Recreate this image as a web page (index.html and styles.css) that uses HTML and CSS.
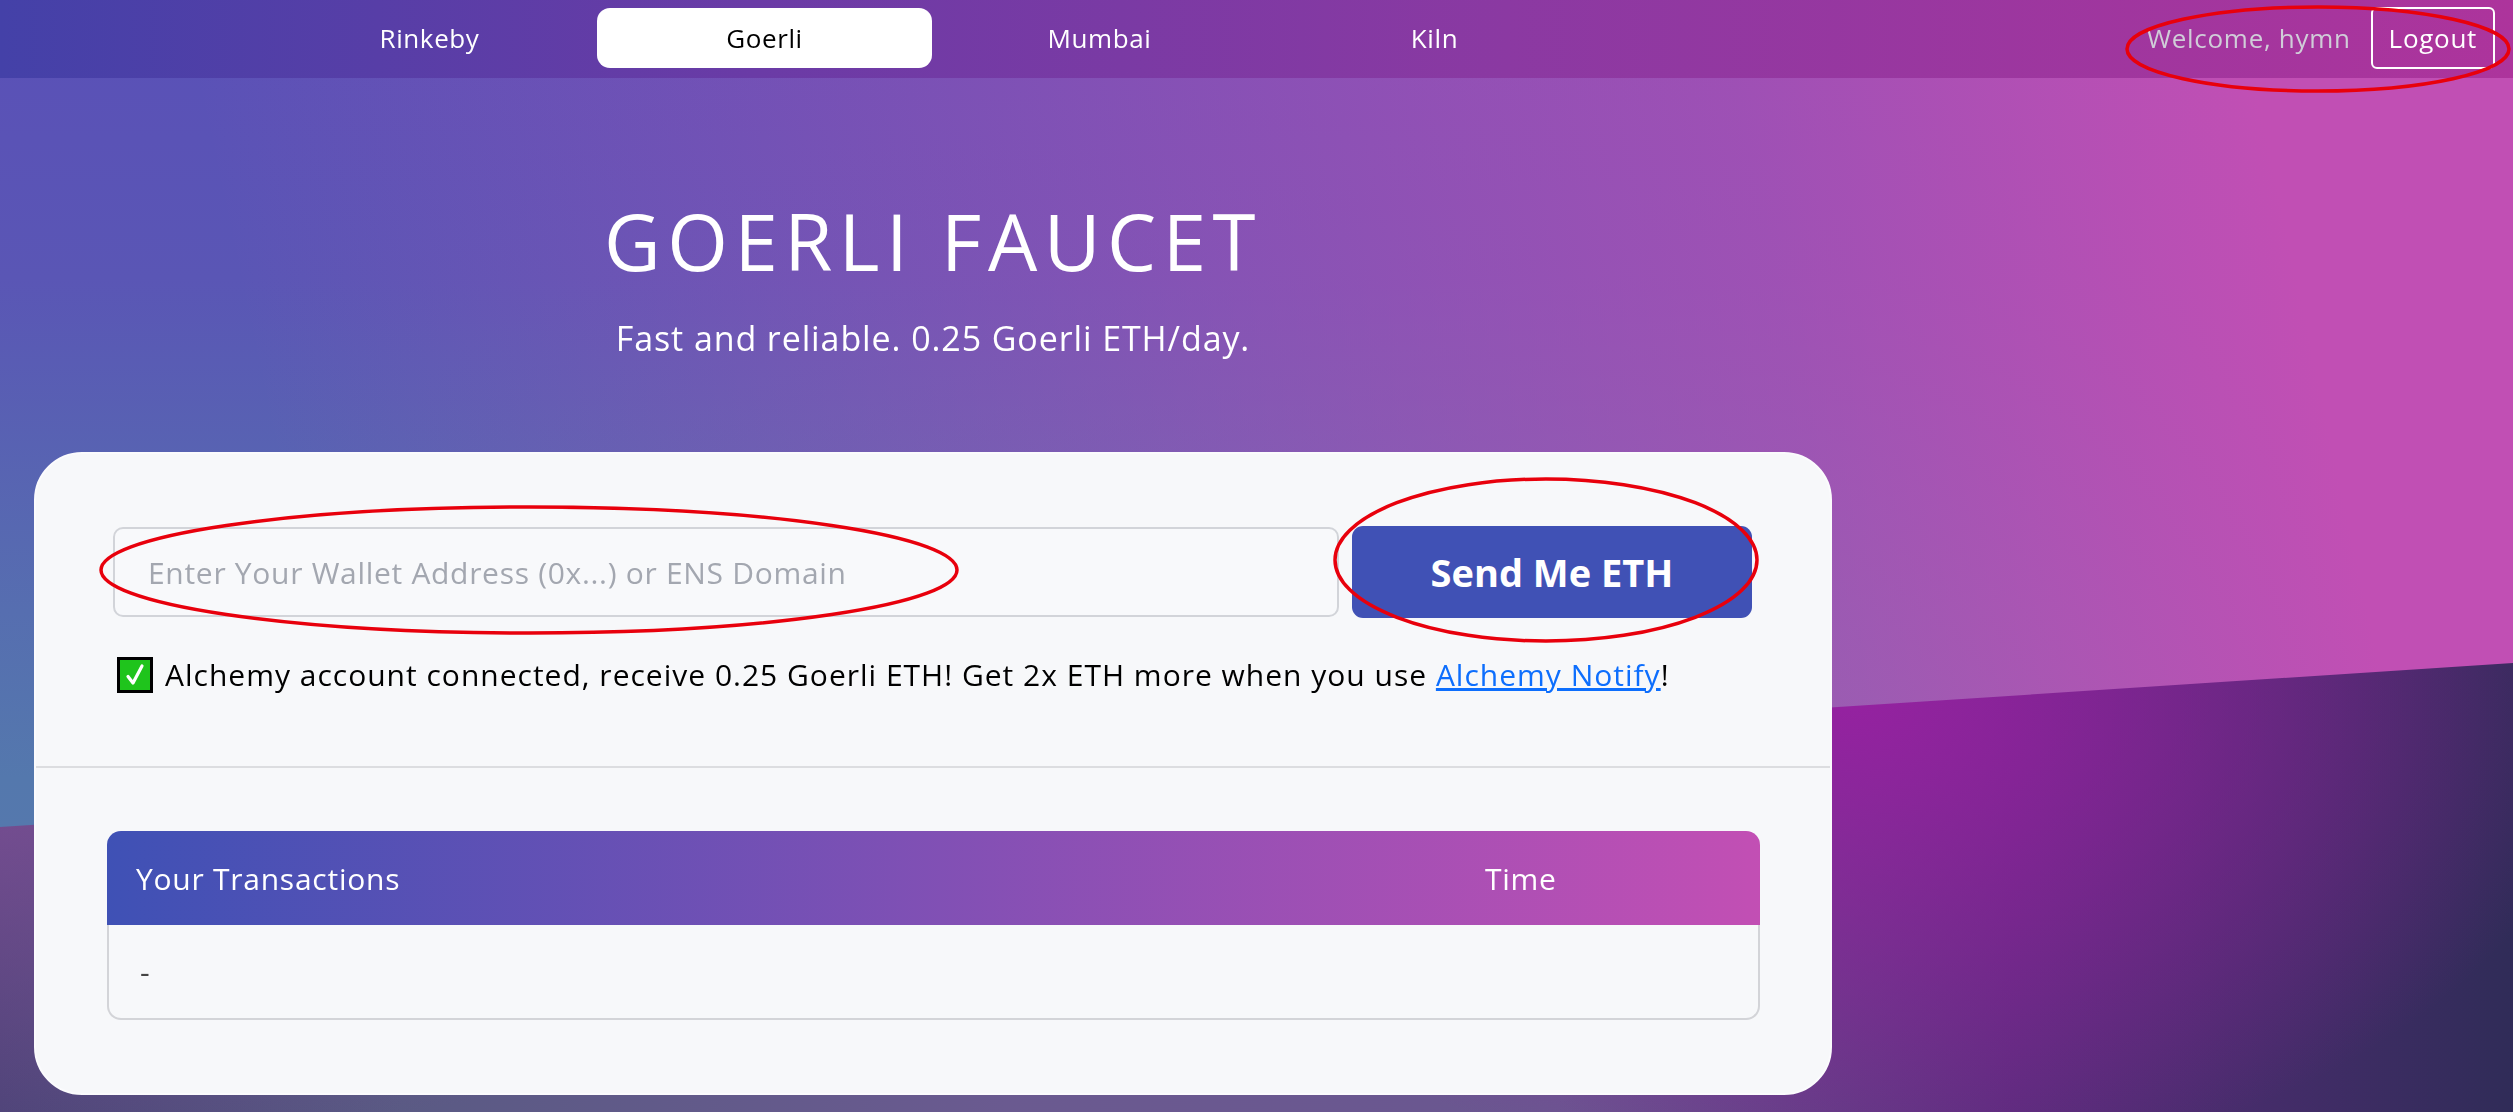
FILE: index.html
```html
<!DOCTYPE html>
<html lang="en">
<head>
<meta charset="utf-8">
<title>Goerli Faucet</title>
<link rel="stylesheet" href="styles.css">
</head>
<body>
<nav class="topnav">
  <div class="net-tabs">
    <a class="tab" href="#">Rinkeby</a>
    <a class="tab tab-active" href="#">Goerli</a>
    <a class="tab" href="#">Mumbai</a>
    <a class="tab" href="#">Kiln</a>
  </div>
  <div class="user">
    <span class="welcome">Welcome, hymn</span>
    <button class="logout" type="button">Logout</button>
  </div>
</nav>
<main class="page">
  <header class="hero">
    <h1 class="hero-title">GOERLI FAUCET</h1>
    <p class="hero-sub">Fast and reliable. 0.25 Goerli ETH/day.</p>
  </header>
  <section class="card">
    <div class="card-top">
      <form class="send-row">
        <input class="addr" type="text" placeholder="Enter Your Wallet Address (0x...) or ENS Domain">
        <button class="send" type="button">Send Me ETH</button>
      </form>
      <p class="notice">
        <svg class="check" viewBox="0 0 36 36" aria-hidden="true">
          <rect x="1.5" y="1.5" width="33" height="33" fill="#1fc41c" stroke="#000" stroke-width="3"/>
          <path d="M11 19.5 L16 26 L25 9" fill="none" stroke="#fff" stroke-width="3.2" stroke-linecap="round" stroke-linejoin="round"/>
        </svg>
        <span class="notice-text">Alchemy account connected, receive 0.25 Goerli ETH! Get 2x ETH more when you use <a class="notice-link" href="#">Alchemy Notify</a>!</span>
      </p>
    </div>
    <div class="card-bottom">
      <div class="tx-table">
        <div class="tx-head">
          <div class="tx-cell">Your Transactions</div>
          <div class="tx-cell">Time</div>
        </div>
        <div class="tx-body">
          <div class="tx-cell tx-dash">-</div>
          <div class="tx-cell"></div>
        </div>
      </div>
    </div>
  </section>
</main>
<svg class="marks" viewBox="0 0 2513 1112" aria-hidden="true">
  <ellipse cx="2318" cy="49" rx="191" ry="42" />
  <ellipse cx="529" cy="570" rx="428" ry="63" />
  <ellipse cx="1546" cy="560" rx="211" ry="81" />
</svg>
</body>
</html>
```
FILE: styles.css
```css
html {
  min-height: 100%;
  background:
    linear-gradient(78deg, rgba(193, 79, 180, 0) 15%, rgba(193, 79, 180, 0.48) 55%, rgba(193, 79, 180, 0.66) 71%, rgba(193, 79, 180, 1) 90%),
    linear-gradient(180deg, #5a50b7 0%, #5a56b5 25%, #566eb0 55%, #5478ad 70%, #5a78ad 100%);
  background-color: #5a50b7;
}

body {
  margin: 0;
  min-height: 1112px;
  position: relative;
  font-family: "Open Sans", "Noto Sans", "Liberation Sans", Arial, sans-serif;
  color: #111;
}

body::before {
  content: "";
  position: fixed;
  inset: 0;
  z-index: -1;
  clip-path: polygon(0 827px, 100% 663px, 100% 100%, 0 100%);
  background:
    radial-gradient(ellipse 760px 480px at 1850px 700px, rgba(152, 32, 162, 0.95), rgba(152, 32, 162, 0) 100%),
    radial-gradient(ellipse 1000px 320px at 0 820px, rgba(122, 78, 148, 0.85), rgba(122, 78, 148, 0) 100%),
    linear-gradient(90deg, #4d4478 0%, #5a5a84 16%, #6a5a90 40%, #6a5690 62%, #5a2d7c 80%, #302c58 100%);
}

/* ---------- nav ---------- */
.topnav {
  height: 78px;
  display: flex;
  align-items: center;
  justify-content: space-between;
  background: linear-gradient(90deg, #4441a8 0%, #6a3ba6 30%, #8b39a2 60%, #ad349c 100%);
  padding: 0 18px 0 262px;
  box-sizing: border-box;
}

.net-tabs {
  display: flex;
  margin-bottom: 3px;
}

.tab {
  width: 335px;
  height: 60px;
  display: flex;
  align-items: center;
  justify-content: center;
  color: #fff;
  text-decoration: none;
  font-size: 26px;
  letter-spacing: 0.6px;
  border-radius: 13px;
}

.tab-active {
  background: #fff;
  color: #000;
}

.user {
  display: flex;
  align-items: center;
  gap: 20px;
  margin-bottom: 3px;
}

.welcome {
  color: #d0cdd8;
  font-size: 26px;
  letter-spacing: 0.7px;
}

.logout {
  height: 62px;
  padding: 0 16px;
  border: 2px solid #fff;
  border-radius: 6px;
  background: transparent;
  color: #fff;
  font-family: inherit;
  font-size: 26px;
  letter-spacing: 0.7px;
}

/* ---------- page ---------- */
.page {
  width: 1798px;
  margin-left: 34px;
}

.hero {
  text-align: center;
  color: #fff;
  padding-top: 116px;
}

.hero-title {
  margin: 0;
  font-size: 78px;
  line-height: 94px;
  font-weight: 400;
  letter-spacing: 6.5px;
}

.hero-sub {
  margin: 30px 0 0;
  font-size: 34px;
  line-height: 41px;
  letter-spacing: 0.9px;
}

.card {
  margin-top: 93px;
  background: #f7f8fa;
  border: 2px solid #fbfbfd;
  border-radius: 48px;
  overflow: hidden;
}

.card-top {
  padding: 73px 78px 73px 77px;
  border-bottom: 2px solid #dcdde0;
}

.send-row {
  display: flex;
  gap: 13px;
  margin: 0;
}

.addr {
  flex: 1;
  height: 90px;
  box-sizing: border-box;
  border: 2px solid #d2d4d9;
  border-radius: 10px;
  background: #f8f9fb;
  padding: 0 33px;
  font-family: inherit;
  font-size: 30px;
  letter-spacing: 0.7px;
  color: #222;
  outline: none;
}

.addr::placeholder {
  color: #a3a7b0;
}

.send {
  width: 400px;
  height: 92px;
  margin-top: -1px;
  border: 0;
  border-radius: 11px;
  background: #4051b5;
  color: #fff;
  font-family: inherit;
  font-size: 38px;
  font-weight: 700;
}

.notice {
  margin: 39px 0 0 4px;
  display: flex;
  align-items: center;
  gap: 12px;
  font-size: 30px;
  line-height: 36px;
  letter-spacing: 1px;
  color: #000;
}

.check {
  width: 36px;
  height: 36px;
  flex: none;
}

.notice-link {
  color: #0d6efd;
  text-decoration: underline;
}

.card-bottom {
  padding: 63px 70px 73px 71px;
}

.tx-head,
.tx-body {
  display: grid;
  grid-template-columns: 1fr 304px;
  align-items: center;
}

.tx-head {
  height: 94px;
  border-radius: 14px 14px 0 0;
  background: linear-gradient(90deg, #3f51b5 0%, #c24fb4 100%);
  color: #fff;
  font-size: 30px;
  letter-spacing: 0.75px;
}

.tx-body {
  height: 95px;
  box-sizing: border-box;
  border: 2px solid #d3d4d8;
  border-top: 0;
  border-radius: 0 0 14px 14px;
  font-size: 30px;
  color: #444;
}

.tx-cell {
  padding-left: 29px;
}

.tx-dash {
  padding-left: 31px;
}

/* ---------- annotation overlay ---------- */
.marks {
  position: absolute;
  top: 0;
  left: 0;
  width: 2513px;
  height: 1112px;
  pointer-events: none;
}

.marks ellipse {
  fill: none;
  stroke: #e8000c;
  stroke-width: 3.5;
}
```
